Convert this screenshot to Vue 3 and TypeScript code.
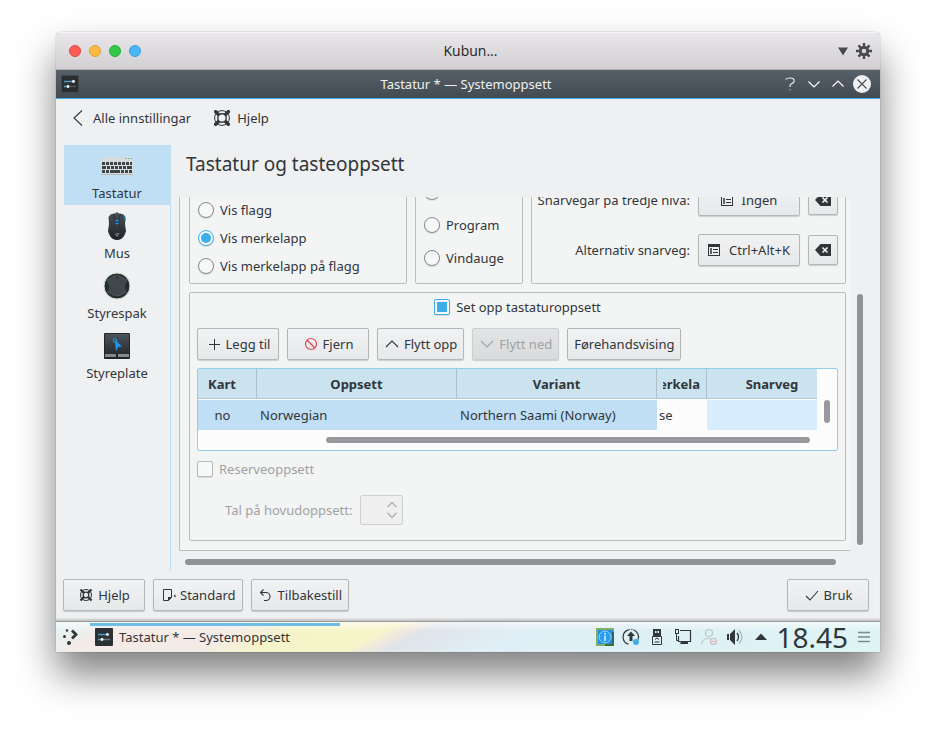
<script setup lang="ts">
import { ref } from 'vue'

interface Module {
  id: string
  label: string
}

interface Layout {
  map: string
  layout: string
  variant: string
  label: string
  shortcut: string
}

const modules: Module[] = [
  { id: 'keyboard', label: 'Tastatur' },
  { id: 'mouse', label: 'Mus' },
  { id: 'joystick', label: 'Styrespak' },
  { id: 'touchpad', label: 'Styreplate' },
]
const activeModule = ref('keyboard')

const indicators = ['Vis flagg', 'Vis merkelapp', 'Vis merkelapp på flagg']
const indicator = ref('Vis merkelapp')

const policies = ['Skrivebord', 'Program', 'Vindauge']
const policy = ref('')

const shortcuts = [
  { label: 'Snarvegar på tredje nivå:', value: 'Ingen' },
  { label: 'Alternativ snarveg:', value: 'Ctrl+Alt+K' },
]

const configure = ref(true)
const layouts: Layout[] = [
  { map: 'no', layout: 'Norwegian', variant: 'Northern Saami (Norway)', label: 'se', shortcut: '' },
]
</script>

<template>
  <div class="page">
    <div class="window">
      <header class="macbar">
        <div class="lights">
          <button class="light red" aria-label="Lukk"></button>
          <button class="light amber" aria-label="Minimer"></button>
          <button class="light green" aria-label="Maksimer"></button>
          <button class="light blue" aria-label="Fullskjerm"></button>
        </div>
        <span class="mactitle">Kubun...</span>
        <div class="mactools">
          <button class="plain" aria-label="Meny">
            <svg width="10" height="16" viewBox="0 0 10 16"><path d="M0 4.500h10L5 12.500z" fill="#4a4a4c" /></svg>
          </button>
          <button class="plain" aria-label="Innstillingar">
            <svg width="16" height="16" viewBox="0 0 16 16">
              <g stroke="#4a4a4c" stroke-width="2.400">
                <path d="M8 0v16M0 8h16M2.400 2.400l11.200 11.200M13.600 2.400L2.400 13.600" />
              </g>
              <circle cx="8" cy="8" r="5.200" fill="#4a4a4c" />
              <circle cx="8" cy="8" r="2.300" fill="#dad8db" />
            </svg>
          </button>
        </div>
      </header>

      <header class="kdebar">
        <svg class="appicon" width="18" height="18" viewBox="0 0 18 18">
          <rect x="0.500" y="0.500" width="17" height="17" rx="1" fill="#2b2e31" stroke="#43484c" />
          <path d="M3 6.500h9" stroke="#4b9cc0" stroke-width="1.500" />
          <path d="M3 11.500h4" stroke="#4b9cc0" stroke-width="1.500" />
          <path d="M8 11.500h7" stroke="#50565a" stroke-width="1.500" />
          <circle cx="12.500" cy="6.500" r="1.400" fill="#fff" />
          <circle cx="7" cy="11.500" r="1.400" fill="#fff" />
        </svg>
        <span>Tastatur * — Systemoppsett</span>
        <div class="kdetools">
          <button class="plain" aria-label="Kva er dette?">
            <svg width="18" height="18" viewBox="0 0 18 18" fill="none" stroke="#e6e8ea" stroke-width="1.200">
              <path d="M4.500 4.500Q5.500 3 9 3q4.200 0 4.200 2.700 0 2-2 2.700Q9 9.200 9 11v1" />
              <path d="M9 14v1.500" stroke="#a5abaf" />
            </svg>
          </button>
          <button class="plain" aria-label="Minimer">
            <svg width="18" height="18" viewBox="0 0 18 18" fill="none" stroke="#fcfcfc" stroke-width="1.200">
              <path d="M3.500 6.500L9 12l5.500-5.500" />
            </svg>
          </button>
          <button class="plain" aria-label="Maksimer">
            <svg width="18" height="18" viewBox="0 0 18 18" fill="none" stroke="#fcfcfc" stroke-width="1.200">
              <path d="M3.500 11.500L9 6l5.500 5.500" />
            </svg>
          </button>
          <button class="plain" aria-label="Lukk">
            <svg width="18" height="18" viewBox="0 0 18 18">
              <circle cx="9" cy="9" r="9" fill="#eff0f1" />
              <path d="M4.500 4.500l9 9M13.500 4.500l-9 9" stroke="#475057" stroke-width="1.200" />
            </svg>
          </button>
        </div>
      </header>

      <nav class="toolbar">
        <button class="toolbtn">
          <svg width="16" height="16" viewBox="0 0 16 16" fill="none" stroke="#31363b" stroke-width="1.100">
            <path d="M12 0.500L4 8l8 7.500" />
          </svg>
          Alle innstillingar
        </button>
        <button class="toolbtn">
          <svg width="16" height="16" viewBox="0 0 16 16" fill="none" stroke="#31363b">
            <circle cx="8" cy="8" r="7.400" stroke-width="1" />
            <circle cx="8" cy="8" r="4.200" stroke-width="1.400" />
            <path d="M0.500 0.500l4.500 4.500M15.500 0.500L11 5M0.500 15.500L5 11M15.500 15.500L11 11" stroke-width="3.400" />
          </svg>
          Hjelp
        </button>
      </nav>

      <div class="body">
        <aside class="sidebar">
          <button
            v-for="m in modules"
            :key="m.id"
            class="module"
            :class="{ active: m.id === activeModule }"
            @click="activeModule = m.id"
          >
            <svg v-if="m.id === 'keyboard'" width="32" height="32" viewBox="0 0 32 32">
              <rect y="7" width="32" height="18" fill="#d9dcdc" />
              <rect y="24" width="32" height="1" fill="#b4b8b9" />
              <path d="M24 8.500h1.500M27 8.500h1.500M30 8.500h1" stroke="#2ecc71" />
              <path d="M1 13.500h30" stroke="#3a4548" stroke-width="3" stroke-dasharray="3 1" />
              <path d="M1 17.500h4M6 17.500h3M10 17.500h3M14 17.500h3M18 17.500h3M22 17.500h3M26 17.500h5" stroke="#3a4548" stroke-width="3" />
              <path d="M1 21.500h3M5 21.500h3M9 21.500h10M20 21.500h3M24 21.500h3M28 21.500h3" stroke="#3a4548" stroke-width="3" />
            </svg>
            <svg v-else-if="m.id === 'mouse'" width="32" height="32" viewBox="0 0 32 32">
              <defs>
                <linearGradient id="mouseBody" x1="0" y1="0" x2="0" y2="1">
                  <stop offset="0" stop-color="#475057" />
                  <stop offset="1" stop-color="#1d2227" />
                </linearGradient>
              </defs>
              <path d="M16 2v3" stroke="#222" />
              <path d="M9.500 4.500Q16 1.500 22.500 4.500L24.500 7 24 14l1 7q-1 5-5 8-4 2-8 0-4-3-5-8l1-7-.5-7z" fill="url(#mouseBody)" />
              <path d="M12.500 4l2 8-1 6M19.500 4l-2 8 1 6" fill="none" stroke="#2a3136" />
              <path d="M23.500 6l.8 5" stroke="#2785b8" />
              <path d="M14.500 10.500h3M14.500 13.500h3" stroke="#1d99f3" stroke-width="1.500" />
              <path d="M14.500 24l1.500 2.500 2-3z" fill="none" stroke="#8d969b" stroke-width=".8" />
            </svg>
            <svg v-else-if="m.id === 'joystick'" width="32" height="32" viewBox="0 0 32 32">
              <circle cx="16" cy="16" r="13" fill="#262a2c" stroke="#c9e6d4" />
              <path d="M5.500 10.500L12 6.500Q16 4.500 20 6.500l6.500 4Q22 16 25.500 22L20 25q-4 2-8 0l-5.500-3Q10 16 5.500 10.500z" fill="#3f474b" />
              <path d="M5.500 10.500L12 6.500Q16 4.500 20 6.500l6.500 4M6.500 22l5.500 3q4 2 8 0l5.500-3" fill="none" stroke="#5a6165" stroke-width=".7" />
              <path d="M16 6l1.500 2h-3z" fill="#202427" />
            </svg>
            <svg v-else width="32" height="32" viewBox="0 0 32 32">
              <defs>
                <linearGradient id="padBody" x1="0" y1="0" x2="0" y2="1">
                  <stop offset="0" stop-color="#4a545b" />
                  <stop offset="1" stop-color="#272c31" />
                </linearGradient>
              </defs>
              <rect x="3" y="3" width="26" height="26" rx="1" fill="#20252a" />
              <rect x="4" y="4" width="24" height="20" fill="url(#padBody)" />
              <path d="M4 24h11v3H4zM17 24h11v3H17z" fill="#858a8d" />
              <circle cx="14" cy="10.500" r="1.800" fill="none" stroke="#1d99f3" />
              <path d="M14 10l7 6.500-4 .5-2 4.500z" fill="#1d99f3" />
            </svg>
            {{ m.label }}
          </button>
        </aside>

        <main class="content">
          <h1>Tastatur og tasteoppsett</h1>

          <div class="scrollrow">
            <div class="viewport">
              <div class="frame">
                <div class="groups">
                  <div class="group indicators">
                    <label v-for="option in indicators" :key="option">
                      <input v-model="indicator" type="radio" name="indicator" :value="option" />{{ option }}
                    </label>
                  </div>
                  <div class="group policies">
                    <label v-for="option in policies" :key="option">
                      <input v-model="policy" type="radio" name="policy" :value="option" />{{ option }}
                    </label>
                  </div>
                  <div class="group shortcuts">
                    <div v-for="s in shortcuts" :key="s.label" class="shortcut">
                      <span>{{ s.label }}</span>
                      <button class="btn key">
                        <svg width="16" height="16" viewBox="0 0 16 16" fill="none" stroke="#31363b">
                          <rect x="2.500" y="2.500" width="11" height="11" />
                          <path d="M2 3.500h12" stroke-width="3" />
                          <path d="M5 6v6" stroke-width="1.500" />
                          <path d="M7 7.500h5M7 10.500h5" />
                        </svg>
                        <span>{{ s.value }}</span>
                      </button>
                      <button class="btn clear" aria-label="Tøm">
                        <svg width="16" height="16" viewBox="0 0 16 16">
                          <path d="M5.500 2H16v12H5.500L0 8z" fill="#31363b" />
                          <path d="M7.500 5.500l5 5M12.500 5.500l-5 5" stroke="#f1f2f3" stroke-width="1.600" />
                        </svg>
                      </button>
                    </div>
                  </div>
                </div>

                <section class="group setup">
                  <label class="master"><input v-model="configure" type="checkbox" />Set opp tastaturoppsett</label>

                  <div class="actions">
                    <button class="btn">
                      <svg width="16" height="16" viewBox="0 0 16 16" stroke="#31363b"><path d="M8.500 3v11M3 8.500h11" /></svg>
                      Legg til
                    </button>
                    <button class="btn">
                      <svg width="16" height="16" viewBox="0 0 16 16" fill="none" stroke="#da4453" stroke-width="1.200">
                        <circle cx="8" cy="8" r="5.500" /><path d="M4 4l8 8" />
                      </svg>
                      Fjern
                    </button>
                    <button class="btn">
                      <svg width="16" height="16" viewBox="0 0 16 16" fill="none" stroke="#31363b" stroke-width="1.100"><path d="M2 11l6-6 6 6" /></svg>
                      Flytt opp
                    </button>
                    <button class="btn" disabled>
                      <svg width="16" height="16" viewBox="0 0 16 16" fill="none" stroke="#a0a2a4" stroke-width="1.100"><path d="M2 5l6 6 6-6" /></svg>
                      Flytt ned
                    </button>
                    <button class="btn">Førehandsvising</button>
                  </div>

                  <div class="tablebox">
                    <div class="tablerow">
                      <div class="tableview">
                        <table>
                          <colgroup>
                            <col class="c-map" />
                            <col class="c-wide" />
                            <col class="c-wide" />
                            <col class="c-label" />
                            <col />
                          </colgroup>
                          <thead>
                            <tr>
                              <th>Kart</th>
                              <th>Oppsett</th>
                              <th>Variant</th>
                              <th><span class="clip">Merkelapp</span></th>
                              <th class="last">Snarveg</th>
                            </tr>
                          </thead>
                          <tbody>
                            <tr v-for="l in layouts" :key="l.map">
                              <td class="sel mid">{{ l.map }}</td>
                              <td class="sel">{{ l.layout }}</td>
                              <td class="sel">{{ l.variant }}</td>
                              <td class="edit">{{ l.label }}</td>
                              <td class="hover">{{ l.shortcut }}</td>
                            </tr>
                          </tbody>
                        </table>
                      </div>
                      <div class="vlane"><div class="thumb"></div></div>
                    </div>
                    <div class="hlane"><div class="thumb"></div></div>
                  </div>

                  <label class="spare off"><input type="checkbox" disabled />Reserveoppsett</label>

                  <div class="count off">
                    <label for="maincount">Tal på hovudoppsett:</label>
                    <span class="spin">
                      <input id="maincount" type="text" disabled />
                      <svg width="12" height="18" viewBox="0 0 12 18" fill="none" stroke="#a8aaac" stroke-width="1.100">
                        <path d="M1.500 6L6 1.500 10.500 6M1.500 12L6 16.500 10.500 12" />
                      </svg>
                    </span>
                  </div>
                </section>
              </div>
            </div>
            <div class="mainv"><div class="thumb"></div></div>
          </div>
          <div class="mainh"><div class="thumb"></div></div>
        </main>
      </div>

      <footer class="footer">
        <button class="btn">
          <svg width="16" height="16" viewBox="0 0 16 16" fill="none" stroke="#31363b">
            <circle cx="8" cy="8" r="5.500" />
            <circle cx="8" cy="8" r="2.800" stroke-width="1.300" />
            <path d="M2.500 2.500L6 6M13.500 2.500L10 6M2.500 13.500L6 10M13.500 13.500L10 10" stroke-width="2.400" />
          </svg>
          Hjelp
        </button>
        <button class="btn">
          <svg width="16" height="16" viewBox="0 0 16 16" fill="none" stroke="#31363b">
            <path d="M8.500 13.500H3.500v-11h8v8z" />
            <path d="M8 14v-4h4z" fill="#31363b" stroke="none" />
            <path d="M15.500 7.500v3l-2-1.500z" fill="#31363b" stroke="none" />
          </svg>
          Standard
        </button>
        <button class="btn">
          <svg width="16" height="16" viewBox="0 0 16 16" fill="none" stroke="#31363b" stroke-width="1.100">
            <path d="M5.500 2.500l-3 3 3 3M2.500 5.500H8a4 4 0 0 1 0 8H6" />
          </svg>
          Tilbakestill
        </button>
        <button class="btn apply">
          <svg width="16" height="16" viewBox="0 0 16 16" fill="none" stroke="#31363b" stroke-width="1.100"><path d="M2 9l4 4 8-9" /></svg>
          Bruk
        </button>
      </footer>

      <div class="taskbar">
        <button class="plain launcher" aria-label="Programstartar">
          <svg width="18" height="18" viewBox="0 0 18 18" fill="#31363b">
            <circle cx="2.500" cy="8.500" r="1.500" />
            <circle cx="5" cy="2.500" r="1.200" />
            <circle cx="7" cy="15" r="2" />
            <path d="M10 2.500l4 4-4 4" fill="none" stroke="#31363b" stroke-width="2.800" />
          </svg>
        </button>
        <button class="task">
          <svg class="appicon" width="18" height="18" viewBox="0 0 18 18">
            <rect width="18" height="18" rx="1" fill="#2b3035" />
            <path d="M3 6.500h9M3 11.500h4" stroke="#4b9cc0" stroke-width="1.500" />
            <path d="M8 11.500h7" stroke="#747a7e" stroke-width="1.500" />
            <circle cx="12.500" cy="6.500" r="1.400" fill="#fff" />
            <circle cx="7" cy="11.500" r="1.400" fill="#fff" />
          </svg>
          Tastatur * — Systemoppsett
        </button>
        <div class="tray">
          <svg width="18" height="18" viewBox="0 0 18 18">
            <rect width="18" height="18" fill="#7fae68" />
            <rect x="2" y="2" width="15" height="14" fill="#1d8fe8" />
            <path d="M9 17h8V4" fill="none" stroke="#2f5c2c" stroke-width="1.500" />
            <circle cx="9" cy="9" r="6" fill="#2a9df0" stroke="#9bd6fb" />
            <path d="M9 7.500V13M9 5v1.500" stroke="#d8f0ff" stroke-width="1.600" />
          </svg>
          <svg width="18" height="18" viewBox="0 0 18 18" fill="none" stroke="#31363b">
            <path d="M6.500 16.200A7.500 7.500 0 0 1 6.500 1.800M11.500 1.800A7.500 7.500 0 0 1 16 11.500" stroke-width="1.200" />
            <path d="M6.500 1.800A7.500 7.500 0 0 1 11.500 1.800" stroke-dasharray="1.500 1" />
            <path d="M9 3.500l4 4.500h-2.500v5h-3V8H5z" fill="#31363b" stroke="none" />
            <circle cx="14" cy="14" r="3" fill="#3daee9" stroke="none" />
          </svg>
          <svg width="18" height="18" viewBox="0 0 18 18" fill="none" stroke="#31363b">
            <path d="M5 1h8v7H5z" fill="#31363b" stroke="none" />
            <path d="M7 3h1.500v2H7zM9.500 3H11v2H9.500z" fill="#e4f4f6" stroke="none" />
            <path d="M4.500 8.500h9v8h-9z" />
            <path d="M7 11.500l2-1.500 2 1.500M6.500 14h5" />
          </svg>
          <svg width="18" height="18" viewBox="0 0 18 18" fill="none" stroke="#31363b">
            <path d="M6 2.500h10.500v11H4.500V8" stroke-width="1.200" />
            <rect x="1.500" y="1.500" width="3" height="4" />
            <path d="M2.500 6v6.500H4" />
            <path d="M7 14h7v2H6z" fill="#31363b" stroke="none" />
          </svg>
          <svg width="18" height="18" viewBox="0 0 18 18" fill="none" stroke="#bcc6c8" stroke-width="1.200">
            <circle cx="9" cy="5" r="3.500" />
            <path d="M1.500 16.500q.5-6 7-6h2" />
            <circle cx="13.500" cy="13.500" r="3" stroke="#d0b6b8" />
            <path d="M12 13.500h3" stroke="#d0b6b8" />
          </svg>
          <svg width="18" height="18" viewBox="0 0 18 18" fill="none">
            <path d="M1 6h2v6H1zM4 6l5-5v16l-5-5z" fill="#31363b" />
            <path d="M11 5q3 4 0 8" stroke="#31363b" stroke-width="1.300" />
            <path d="M13 2.500q6 6.500 0 13" stroke="#a5b2b4" stroke-width="1.200" />
          </svg>
          <svg width="18" height="18" viewBox="0 0 18 18"><path d="M3 12l6-6.500 6 6.500z" fill="#31363b" /></svg>
        </div>
        <time class="clock">18.45</time>
        <button class="plain" aria-label="Panelverktøy">
          <svg width="12" height="12" viewBox="0 0 12 12" stroke="#7e8a8c" stroke-width="1.400"><path d="M0 1.500h12M0 6h12M0 10.500h12" /></svg>
        </button>
      </div>
    </div>
  </div>
</template>

<style>
body {
  background: #fff;
}
</style>

<style scoped>
.page {
  box-sizing: border-box;
  display: flex;
  height: 100vh;
  min-height: 600px;
  padding: 32px 56px 80px;
  font: 13px/18px "Noto Sans", sans-serif;
  color: #31363b;
}

.page *,
.page *::before {
  box-sizing: border-box;
}

button,
input {
  margin: 0;
  font: inherit;
  color: inherit;
}

svg {
  display: block;
  flex: none;
}

.window {
  flex: 1;
  min-width: 0;
  display: flex;
  flex-direction: column;
  overflow: hidden;
  border-radius: 5px 5px 0 0;
  background: #eff0f1;
  box-shadow: 0 0 1px rgba(0, 0, 0, 0.6), 0 22px 38px rgba(0, 0, 0, 0.5);
}

.plain {
  display: block;
  padding: 0;
  border: 0;
  background: none;
}

.macbar,
.kdebar {
  flex: none;
  display: grid;
  grid-template-columns: 1fr auto 1fr;
  align-items: center;
}

.macbar {
  height: 38px;
  padding: 0 8px 0 13px;
  background: linear-gradient(#e9e7ea, #d2cfd3);
  border-top: 1px solid #f4f4f4;
  border-bottom: 1px solid #aeacb0;
}

.mactitle {
  font-family: "Open Sans", "Noto Sans", sans-serif;
  font-size: 14px;
  color: #222;
}

.lights {
  display: flex;
  gap: 8px;
}

.light {
  width: 12px;
  height: 12px;
  padding: 0;
  border: 1px solid;
  border-radius: 50%;
}

.red { background: #fc5b57; border-color: #e2443f; }
.amber { background: #fdbc40; border-color: #e0a033; }
.green { background: #34c84a; border-color: #25ad35; }
.blue { background: #4bb5f5; border-color: #3a9edb; }

.mactools,
.kdetools {
  display: flex;
  justify-content: flex-end;
  gap: 8px;
}

.kdebar {
  height: 29px;
  padding: 0 9px 0 5px;
  color: #eff0f1;
  background: linear-gradient(#566068, #434b52);
  border-bottom: 1px solid #3daee9;
}

.kdetools {
  gap: 6px;
}

.toolbar {
  flex: none;
  display: flex;
  gap: 23px;
  height: 46px;
  padding: 0 14px 8px;
}

.toolbtn {
  display: flex;
  align-items: center;
  gap: 7px;
  padding: 0;
  border: 0;
  background: none;
}

.body {
  flex: 1;
  min-height: 0;
  display: flex;
  gap: 8px;
  padding-left: 8px;
}

.sidebar {
  flex: none;
  width: 107px;
  border-right: 1px solid #bfdff5;
}

.module {
  display: flex;
  flex-direction: column;
  align-items: center;
  gap: 2px;
  width: 100%;
  height: 60px;
  padding: 5px 0 0;
  border: 0;
  background: none;
}

.module.active {
  background: #c0dff4;
}

.content {
  flex: 1;
  min-width: 0;
  display: flex;
  flex-direction: column;
}

h1 {
  flex: none;
  margin: 0;
  padding: 5px 7px 19px;
  font-size: 19px;
  line-height: 28px;
  font-weight: 400;
}

.scrollrow {
  flex: 1;
  min-height: 0;
  display: flex;
}

.viewport {
  flex: 1;
  min-width: 0;
  display: flex;
  flex-direction: column;
  justify-content: flex-end;
  overflow: hidden;
}

.frame {
  flex: none;
  display: flex;
  flex-direction: column;
  gap: 8px;
  padding: 9px 4px 9px 9px;
  border: 1px solid #bbbdbf;
  border-right: 0;
  border-radius: 2px 0 0 2px;
  background: #f3f5f4;
}

.thumb {
  border-radius: 3px;
  background: #8f9396;
}

.mainv {
  flex: none;
  display: flex;
  flex-direction: column;
  justify-content: flex-end;
  width: 30px;
  padding: 0 17px 6px 7px;
}

.mainv .thumb {
  height: 72%;
}

.mainh {
  flex: none;
  padding: 8px 44px 5px 6px;
}

.mainh .thumb {
  height: 6px;
}

.groups {
  display: flex;
  gap: 8px;
}

.group {
  display: flex;
  flex-direction: column;
  justify-content: flex-end;
  border: 1px solid #bbbdbf;
  border-radius: 2px;
}

.group label,
.count {
  display: flex;
  align-items: center;
  gap: 6px;
  white-space: nowrap;
}

.indicators {
  flex: 1;
  padding: 0 8px 3px;
}

.indicators label {
  height: 28px;
}

.policies {
  flex: none;
  width: 108px;
  padding: 0 8px 9px;
}

.policies label {
  height: 33px;
}

.shortcuts {
  flex: none;
  width: 315px;
  gap: 18px;
  padding: 17px 7px;
}

.shortcut {
  display: flex;
  align-items: center;
  justify-content: flex-end;
  gap: 8px;
  white-space: nowrap;
}

input[type="radio"],
input[type="checkbox"] {
  appearance: none;
  flex: none;
  display: grid;
  place-items: center;
  width: 16px;
  height: 16px;
  border: 1px solid #85898c;
  background: #f7f8f8;
  box-shadow: 0 1px 1px rgba(0, 0, 0, 0.12);
}

input[type="radio"] {
  border-radius: 50%;
}

input[type="checkbox"] {
  border-radius: 2px;
}

input:checked {
  border-color: #3daee9;
}

input:checked::before {
  content: "";
  width: 10px;
  height: 10px;
  background: #3daee9;
}

input[type="radio"]:checked::before {
  border-radius: 50%;
}

.btn {
  flex: none;
  display: flex;
  align-items: center;
  justify-content: center;
  gap: 4px;
  min-width: 82px;
  height: 32px;
  padding: 0 6px;
  border: 1px solid #b4b6b8;
  border-radius: 2px;
  background: linear-gradient(#f1f2f3, #e7e8ea);
  box-shadow: 0 1px 1px rgba(0, 0, 0, 0.16);
  white-space: nowrap;
}

.btn:disabled {
  color: #a0a2a4;
  border-color: #cccecf;
  background: linear-gradient(#e2e3e4, #dadbdc);
}

.key {
  width: 102px;
  gap: 7px;
  padding: 0 8px 0 6px;
}

.clear {
  min-width: 30px;
  width: 30px;
  height: 30px;
  padding: 0;
}

.setup {
  justify-content: flex-start;
  padding: 6px 7px 15px;
}

.master {
  align-self: center;
  height: 16px;
}

.actions {
  display: flex;
  gap: 8px;
  margin: 13px 0 8px;
}

.tablebox {
  border: 1px solid #93cee9;
  border-radius: 2px;
  background: #fcfcfc;
}

.tablerow {
  display: flex;
}

.tableview {
  flex: 1;
  min-width: 0;
  overflow: hidden;
}

table {
  width: 100%;
  table-layout: fixed;
  border-collapse: separate;
  border-spacing: 0;
}

.c-map { width: 59px; }
.c-wide { width: 200px; }
.c-label { width: 50px; }

th {
  height: 30px;
  padding: 0 6px;
  border-right: 1px solid #aebfc9;
  border-bottom: 1px solid #b4c8d3;
  background: #cbe3ee;
  font-weight: 700;
}

th:first-child {
  padding: 0 10px 0 0;
}

th.last {
  padding: 0 0 0 20px;
  border-right: 0;
}

.clip {
  display: flex;
  justify-content: center;
  overflow: hidden;
}

td {
  height: 31px;
  padding: 0 3px;
  border-top: 1px solid #fcfcfc;
  white-space: nowrap;
}

.sel { background: #c0dff4; }
.mid { padding: 0 10px 0 0; text-align: center; }
.edit { padding: 0 2px; }
.hover { background: #d7edfe; }

.vlane {
  flex: none;
  width: 20px;
  padding: 31px 7px 7px;
}

.vlane .thumb {
  width: 6px;
  height: 23px;
}

.hlane {
  padding: 7px 27px 7px 128px;
}

.hlane .thumb {
  height: 6px;
}

.tablebox .thumb {
  background: #98989e;
}

.off {
  color: #a0a2a4;
}

.spare {
  align-self: flex-start;
  height: 16px;
  margin: 10px 0 18px;
}

.spare input {
  border-color: #b9bbbd;
}

.count {
  gap: 8px;
  padding-left: 28px;
}

.spin {
  display: flex;
  align-items: center;
  width: 43px;
  height: 30px;
  padding: 0 4px;
  border: 1px solid #cfd0d1;
  border-radius: 2px;
  background: #efefef;
}

.spin input {
  flex: 1;
  min-width: 0;
  padding: 0;
  border: 0;
  background: none;
}

.footer {
  flex: none;
  display: flex;
  gap: 8px;
  padding: 9px 11px 10px 7px;
  border-bottom: 1px solid #9a9b9c;
  box-shadow: inset 0 -3px 2px -1px #c4c5c6;
}

.apply {
  margin-left: auto;
}

.taskbar {
  flex: none;
  display: flex;
  align-items: center;
  height: 30px;
  padding: 0 10px 0 6px;
  background:
    linear-gradient(rgba(255, 255, 255, 0.6), rgba(255, 255, 255, 0) 30%),
    linear-gradient(153deg, #dff5f6 0, #f4ebe8 8%, #f4ebe7 22%, #f5f4c9 29%, #f6f5c8 39%, #f2e9dc 41%, #dfe4ea 44%, #e0eef6 54%, #def0f5 72%, #def5f4 100%);
}

.launcher {
  margin-right: 10px;
}

.task {
  flex: none;
  display: flex;
  align-items: center;
  gap: 6px;
  width: 250px;
  height: 30px;
  padding: 0 5px;
  border: 0;
  background: linear-gradient(#6cbde8, #6cbde8) 0 1px / 100% 3px no-repeat;
  white-space: nowrap;
}

.tray {
  flex: none;
  display: flex;
  gap: 8px;
  margin-left: auto;
}

.clock {
  flex: none;
  margin: 0 10px 0 6px;
  font-size: 28px;
  line-height: 30px;
}
</style>
